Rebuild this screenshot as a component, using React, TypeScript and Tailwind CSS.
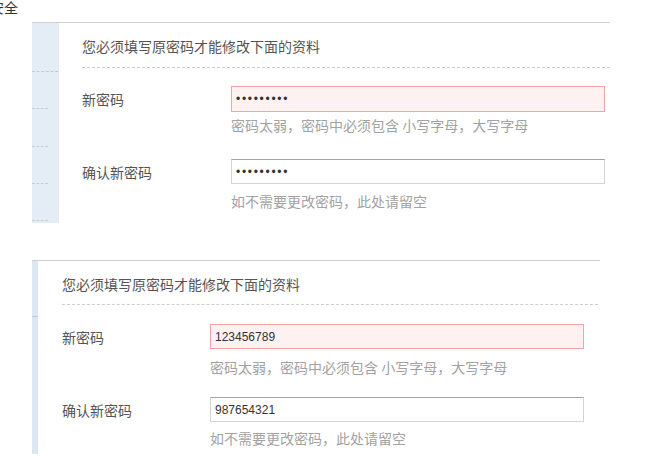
import { useState } from "react";

type FieldProps = {
  label: string;
  value: string;
  type: "text" | "password";
  error?: boolean;
  hint: string;
  labelWidth: string;
  rowTop: string;
  inputHeight: string;
  hintTop: string;
};

function Field({ label, value, type, error, hint, labelWidth, rowTop, inputHeight, hintTop }: FieldProps) {
  const [val, setVal] = useState(value);
  return (
    <div className={rowTop}>
      <div className="flex items-center">
        <div className={`${labelWidth} shrink-0 text-[14px] leading-[20px] text-[#555]`}>{label}</div>
        <input
          type={type}
          value={val}
          onChange={(e) => setVal(e.target.value)}
          className={`${inputHeight} w-[374px] px-[4px] font-['Liberation_Sans',sans-serif] text-[12px] text-[#333] outline-none ${
            type === "password" ? "tracking-[1.7px]" : ""
          } ${
            error
              ? "border border-[#f1a3a5] bg-[#fdf1f1]"
              : "border border-[#d4d4d4] border-t-[#a3a3a3] bg-white"
          }`}
        />
      </div>
      <div className={`flex ${hintTop}`}>
        <div className={`${labelWidth} shrink-0`} />
        <div className="text-[14px] leading-[20px] text-[#a2a2a2]">{hint}</div>
      </div>
    </div>
  );
}

const WEAK = "密码太弱，密码中必须包含 小写字母，大写字母";
const EMPTY = "如不需要更改密码，此处请留空";

export default function App() {
  return (
    <div className="h-[474px] w-[648px] overflow-hidden bg-white font-['Noto_Sans_CJK_SC',sans-serif]">
      {/* cut-off heading from the page above */}
      <div className="-ml-[10px] -mt-[3px] h-[25px] text-[14px] leading-[20px] text-[#333]">安全</div>

      {/* first capture: masked passwords */}
      <div className="ml-[32px] flex w-[578px] border-t border-[#cfcfcf]">
        <div className="flex w-[27px] shrink-0 flex-col bg-[#e4ecf5] pt-[48px]">
          <div className="w-[26px] border-t border-dashed border-[#c3cad3]" />
          <div className="mt-[36px] w-[16px] border-t border-dashed border-[#c8ced6]" />
          <div className="mt-[37px] w-[16px] border-t border-dashed border-[#c8ced6]" />
          <div className="mt-[36px] w-[16px] border-t border-dashed border-[#c8ced6]" />
          <div className="mt-[36px] w-[16px] border-t border-dashed border-[#c8ced6]" />
        </div>
        <div className="flex-1 pb-[12px] pl-[23px]">
          <div className="mt-[13px] border-b border-dashed border-[#cdcdcd] pb-[11px] text-[14px] leading-[20px] text-[#555]">
            您必须填写原密码才能修改下面的资料
          </div>
          <Field
            label="新密码"
            value="123456789"
            type="password"
            error
            hint={WEAK}
            labelWidth="w-[149px]"
            rowTop="mt-[18px]"
            inputHeight="h-[26px]"
            hintTop="mt-[3px]"
          />
          <Field
            label="确认新密码"
            value="987654321"
            type="password"
            hint={EMPTY}
            labelWidth="w-[149px]"
            rowTop="mt-[24px]"
            inputHeight="h-[25px]"
            hintTop="mt-[7px]"
          />
        </div>
      </div>

      {/* second capture: passwords shown */}
      <div className="ml-[32px] mt-[37px] flex w-[568px] border-t border-[#cfcfcf]">
        <div className="flex w-[6px] shrink-0 flex-col bg-[#dde7f2] pt-[55px]">
          <div className="w-[6px] border-t border-dashed border-[#c3cad3]" />
        </div>
        <div className="flex-1 pb-[6px] pl-[24px] pr-[2px]">
          <div className="mt-[13px] border-b border-dashed border-[#cdcdcd] pb-[10px] text-[14px] leading-[20px] text-[#555]">
            您必须填写原密码才能修改下面的资料
          </div>
          <Field
            label="新密码"
            value="123456789"
            type="text"
            error
            hint={WEAK}
            labelWidth="w-[148px]"
            rowTop="mt-[19px]"
            inputHeight="h-[25px]"
            hintTop="mt-[8px]"
          />
          <Field
            label="确认新密码"
            value="987654321"
            type="text"
            hint={EMPTY}
            labelWidth="w-[148px]"
            rowTop="mt-[20px]"
            inputHeight="h-[25px]"
            hintTop="mt-[6px]"
          />
        </div>
      </div>
    </div>
  );
}
